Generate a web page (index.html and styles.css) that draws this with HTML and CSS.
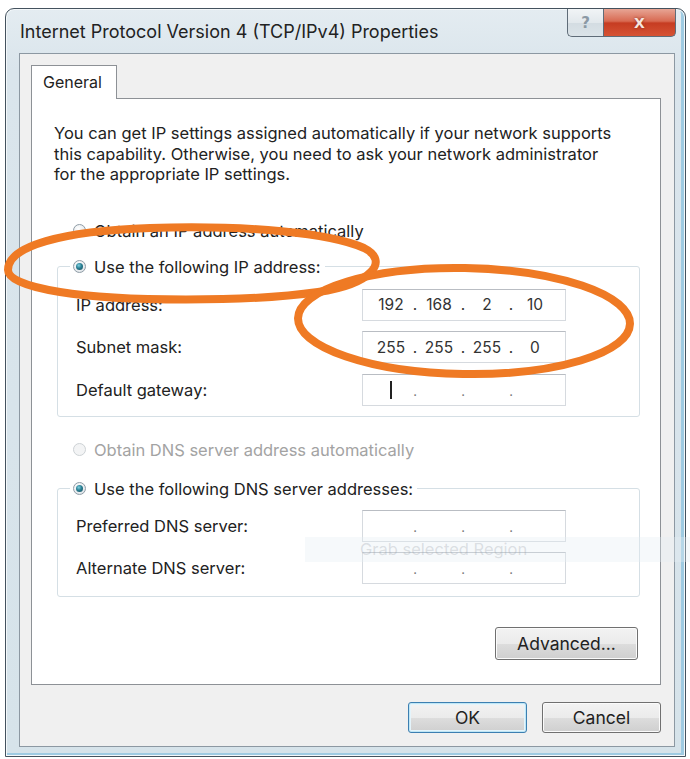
FILE: index.html
```html
<!DOCTYPE html>
<html lang="en">
<head>
    <meta charset="UTF-8">
    <meta name="viewport" content="width=device-width, initial-scale=1.0">
    <title>Internet Protocol Version 4 (TCP/IPv4) Properties</title>
    <link rel="stylesheet" href="styles.css">
</head>
<body>

    <div class="window">
        <div class="titlebar">
            <div class="title">Internet Protocol Version 4 (TCP/IPv4) Properties</div>
            <div class="caption-buttons">
                <span class="cap-btn help">?</span>
                <span class="cap-btn close">X</span>
            </div>
        </div>

        <div class="client">
            <div class="tab">General</div>
            <div class="panel">
                <p class="intro">You can get IP settings assigned automatically if your network supports<br>this capability. Otherwise, you need to ask your network administrator<br>for the appropriate IP settings.</p>

                <div class="option option-first">
                    <span class="radio"></span>
                    <span>Obtain an IP address automatically</span>
                </div>

                <fieldset class="group group-ip">
                    <legend class="option">
                        <span class="radio checked"></span>
                        <span>Use the following IP address:</span>
                    </legend>
                    <div class="rows">
                        <div class="row">
                            <span>IP address:</span>
                            <div class="ipfield">
                                <span class="octet">192</span><span class="dot">.</span><span class="octet">168</span><span class="dot">.</span><span class="octet">2</span><span class="dot">.</span><span class="octet">10</span>
                            </div>
                        </div>
                        <div class="row">
                            <span>Subnet mask:</span>
                            <div class="ipfield">
                                <span class="octet">255</span><span class="dot">.</span><span class="octet">255</span><span class="dot">.</span><span class="octet">255</span><span class="dot">.</span><span class="octet">0</span>
                            </div>
                        </div>
                        <div class="row">
                            <span>Default gateway:</span>
                            <div class="ipfield empty">
                                <span class="octet"><span class="caret"></span></span><span class="dot">.</span><span class="octet"></span><span class="dot">.</span><span class="octet"></span><span class="dot">.</span><span class="octet"></span>
                            </div>
                        </div>
                    </div>
                </fieldset>

                <div class="option option-dns disabled">
                    <span class="radio"></span>
                    <span>Obtain DNS server address automatically</span>
                </div>

                <fieldset class="group group-dns">
                    <legend class="option">
                        <span class="radio checked"></span>
                        <span>Use the following DNS server addresses:</span>
                    </legend>
                    <div class="rows">
                        <div class="row">
                            <span>Preferred DNS server:</span>
                            <div class="ipfield empty">
                                <span class="octet"></span><span class="dot">.</span><span class="octet"></span><span class="dot">.</span><span class="octet"></span><span class="dot">.</span><span class="octet"></span>
                            </div>
                        </div>
                        <div class="row">
                            <span>Alternate DNS server:</span>
                            <div class="ipfield empty">
                                <span class="octet"></span><span class="dot">.</span><span class="octet"></span><span class="dot">.</span><span class="octet"></span><span class="dot">.</span><span class="octet"></span>
                            </div>
                        </div>
                    </div>
                </fieldset>

                <button class="btn btn-advanced">Advanced...</button>
            </div>

            <div class="footer">
                <button class="btn btn-default">OK</button>
                <button class="btn">Cancel</button>
            </div>
        </div>
    </div>

    <!-- capture tool leftover -->
    <div class="grab-band"><span>Grab selected Region</span></div>

    <!-- hand-drawn highlight marks -->
    <svg class="marks" width="690" height="759" viewBox="0 0 690 759">
        <path d="M 8 270 C 8 246, 62 231, 150 228 C 250 225, 330 233, 364 248 C 390 261, 372 284, 318 292 C 250 302, 120 302, 60 292 C 22 286, 8 278, 8 270 Z"/>
        <ellipse cx="464" cy="321" rx="166" ry="53" transform="rotate(1 464 321)"/>
    </svg>

</body>
</html>
```

FILE: styles.css
```css
body {
    margin: 0;
    width: 690px;
    height: 759px;
    overflow: hidden;
    position: relative;
    background-color: #fff;
    font-family: Inter, "Open Sans", sans-serif;
    font-size: 16.5px;
    color: #222;
}

/* --- window frame --- */
.window {
    box-sizing: border-box;
    margin: 8px 0 0 5px;
    width: 681px;
    height: 749px;
    border: 1px solid #44525e;
    border-radius: 9px 9px 0 0;
    background: linear-gradient(to bottom, #e4ecf1 0%, #dae5ec 8%, #d6e3ea 100%);
    box-shadow: inset 0 0 0 1px #f4f8fa, inset -4px -3px 0 #9fcbe2;
}

.titlebar {
    display: flex;
    justify-content: space-between;
    align-items: flex-start;
    height: 44px;
}

.title {
    margin: 12px 0 0 14px;
    font-size: 18px;
    line-height: 22px;
    color: #222;
}

.caption-buttons {
    display: flex;
    margin-right: 9px;
}

.cap-btn {
    box-sizing: border-box;
    height: 28px;
    display: flex;
    align-items: center;
    justify-content: center;
    border: 1px solid #5f6c78;
    border-top: none;
    font-family: "DejaVu Sans", sans-serif;
    font-weight: bold;
}

.cap-btn.help {
    width: 36px;
    border-radius: 0 0 0 5px;
    border-right: none;
    background: linear-gradient(to bottom, #f1f4f6 0%, #e2e8ec 50%, #d3dce2 51%, #dbe3e8 100%);
    color: #8b99a5;
    font-size: 15px;
}

.cap-btn.close {
    width: 73px;
    border-radius: 0 0 5px 0;
    background: linear-gradient(to bottom, #e7a595 0%, #d86a52 45%, #c63c22 52%, #d65334 100%);
    color: #f6e6e0;
    font-size: 14px;
    text-shadow: 0 0 3px #8a2a18;
}

/* --- client area --- */
.client {
    box-sizing: border-box;
    margin: 0 10px 0 13px;
    height: 694px;
    border: 1px solid #8c98a2;
    background-color: #f0f0f0;
    padding: 11px 13px 0 11px;
}

.tab {
    position: relative;
    z-index: 1;
    box-sizing: border-box;
    width: 86px;
    height: 34px;
    margin-bottom: -1px;
    padding: 6px 0 0 11px;
    border: 1px solid #8d9196;
    border-bottom: none;
    background-color: #fff;
    font-size: 16px;
    line-height: 20px;
}

.panel {
    box-sizing: border-box;
    height: 587px;
    border: 1px solid #8d9196;
    background-color: #fff;
    padding: 0 20px 0 22px;
    display: flex;
    flex-direction: column;
}

.intro {
    margin: 24px 0 0;
    line-height: 20.5px;
    white-space: nowrap;
}

/* --- radio options --- */
.option {
    display: flex;
    align-items: center;
    gap: 8px;
    line-height: 20px;
}

.option-first {
    margin: 36px 0 0 19px;
}

.option-dns {
    margin: 23px 0 0 19px;
}

.disabled {
    color: #a3a3a3;
}

.radio {
    box-sizing: border-box;
    width: 13px;
    height: 13px;
    border-radius: 50%;
    border: 1px solid #8f9ca6;
    background: radial-gradient(circle at 40% 35%, #ffffff 0%, #e8ecef 60%, #d3d9de 100%);
    display: flex;
    align-items: center;
    justify-content: center;
}

.disabled .radio {
    border-color: #cdd2d5;
    background: #f3f4f5;
}

.radio.checked::after {
    content: "";
    width: 7px;
    height: 7px;
    border-radius: 50%;
    background: radial-gradient(circle at 40% 35%, #7fd0e0 0%, #2a7f93 45%, #174b5a 100%);
}

/* --- group boxes --- */
.group {
    margin: 16px 0 0 3px;
    padding: 12px 18px 10px 18px;
    border: 1px solid #d5dfe5;
    border-radius: 3px;
    min-width: 0;
}

.group-dns {
    margin-top: 19px;
    padding-top: 11px;
    padding-bottom: 12px;
}

.group legend {
    padding: 0 4px 0 3px;
    margin-left: -6px;
}

.rows {
    display: flex;
    flex-direction: column;
    gap: 10.5px;
}

.group-dns .rows {
    gap: 10px;
}

.row {
    display: grid;
    grid-template-columns: 286px 204px;
    align-items: center;
}

.ipfield {
    box-sizing: border-box;
    height: 32px;
    border: 1px solid #d6dadf;
    border-top-color: #b9bdc3;
    background-color: #fff;
    padding-left: 11px;
    display: flex;
    align-items: center;
    font-size: 15.5px;
    color: #333;
}

.octet {
    width: 34px;
    text-align: center;
    display: flex;
    justify-content: center;
    align-items: center;
}

.dot {
    width: 14px;
    text-align: center;
}

.empty .dot {
    color: #777;
    font-size: 13px;
    padding-top: 3px;
}

.caret {
    display: inline-block;
    width: 2px;
    height: 18px;
    background-color: #222;
}

/* --- buttons --- */
.btn {
    box-sizing: border-box;
    font-family: Inter, "Open Sans", sans-serif;
    font-size: 17.5px;
    color: #222;
    border: 1px solid #707070;
    border-radius: 3px;
    background: linear-gradient(to bottom, #f3f3f3 0%, #ebebeb 50%, #dddddd 51%, #cfcfcf 100%);
    box-shadow: inset 0 0 0 1px #fbfbfb;
    padding: 0;
}

.btn-advanced {
    align-self: flex-end;
    margin: 30px 2px 0 0;
    width: 143px;
    height: 33px;
}

.footer {
    display: flex;
    justify-content: flex-end;
    gap: 15px;
    margin-top: 17px;
}

.footer .btn {
    width: 119px;
    height: 31px;
}

.btn-default {
    border-color: #3c7fb1;
    box-shadow: inset 0 0 0 1px #bfe6f5, inset 0 0 0 2px #e4f4fb;
}

/* --- overlays --- */
.grab-band {
    position: absolute;
    left: 305px;
    top: 537px;
    width: 385px;
    height: 25px;
    background-color: rgba(228, 238, 243, 0.35);
}

.grab-band span {
    display: block;
    margin-left: 55px;
    line-height: 25px;
    font-size: 16.5px;
    color: rgba(150, 160, 168, 0.3);
}

.marks {
    position: absolute;
    left: 0;
    top: 0;
    pointer-events: none;
}

.marks path,
.marks ellipse {
    fill: none;
    stroke: #ef7a24;
    stroke-width: 8;
}
```
